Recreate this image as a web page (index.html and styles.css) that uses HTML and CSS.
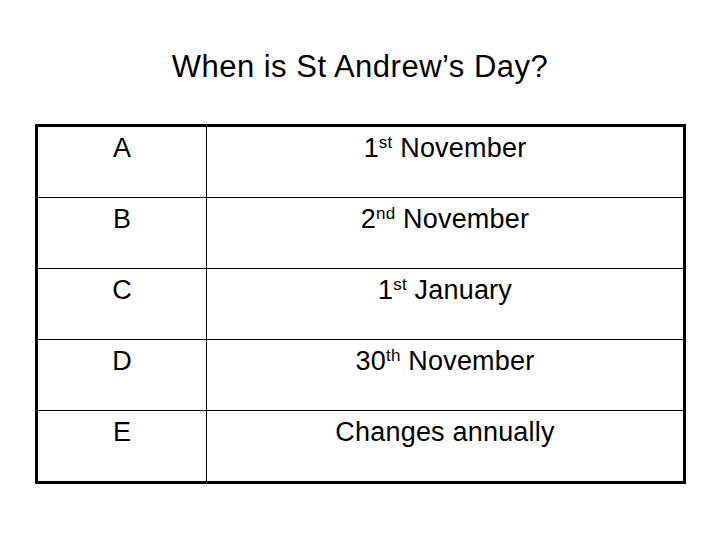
FILE: index.html
```html
<!DOCTYPE html>
<html>
<head>
<meta charset="utf-8">
<link rel="stylesheet" href="styles.css">
</head>
<body>
<h1 class="title">When is St Andrew’s Day?</h1>
<div class="quiz">
  <div class="row"><div class="key">A</div><div class="answer">1<sup>st</sup> November</div></div>
  <div class="row"><div class="key">B</div><div class="answer">2<sup>nd</sup> November</div></div>
  <div class="row"><div class="key">C</div><div class="answer">1<sup>st</sup> January</div></div>
  <div class="row"><div class="key">D</div><div class="answer">30<sup>th</sup> November</div></div>
  <div class="row"><div class="key">E</div><div class="answer">Changes annually</div></div>
</div>
</body>
</html>
```
FILE: styles.css
```css
html, body {
  margin: 0;
  padding: 0;
  background: #fff;
}
body {
  width: 720px;
  height: 540px;
  font-family: "Liberation Sans", Arial, sans-serif;
  color: #000;
}
.title {
  margin: 0;
  padding-top: 50px;
  height: 74px;
  box-sizing: border-box;
  font-size: 31px;
  line-height: 34px;
  letter-spacing: 0.5px;
  font-weight: normal;
  text-align: center;
}
.quiz {
  margin-left: 35px;
  margin-top: 50px;
  width: 651px;
  box-sizing: border-box;
  border: 3px solid #000;
}
.row {
  display: grid;
  grid-template-columns: 168px 1fr;
  height: 70px;
}
.row + .row {
  border-top: 1.5px solid #000;
}
.key, .answer {
  font-size: 27px;
  line-height: 30px;
  letter-spacing: 0.2px;
  padding-top: 6px;
  text-align: center;
}
.answer {
  border-left: 1.5px solid #000;
}
sup {
  font-size: 17px;
  line-height: 0;
  vertical-align: 9px;
}
```
